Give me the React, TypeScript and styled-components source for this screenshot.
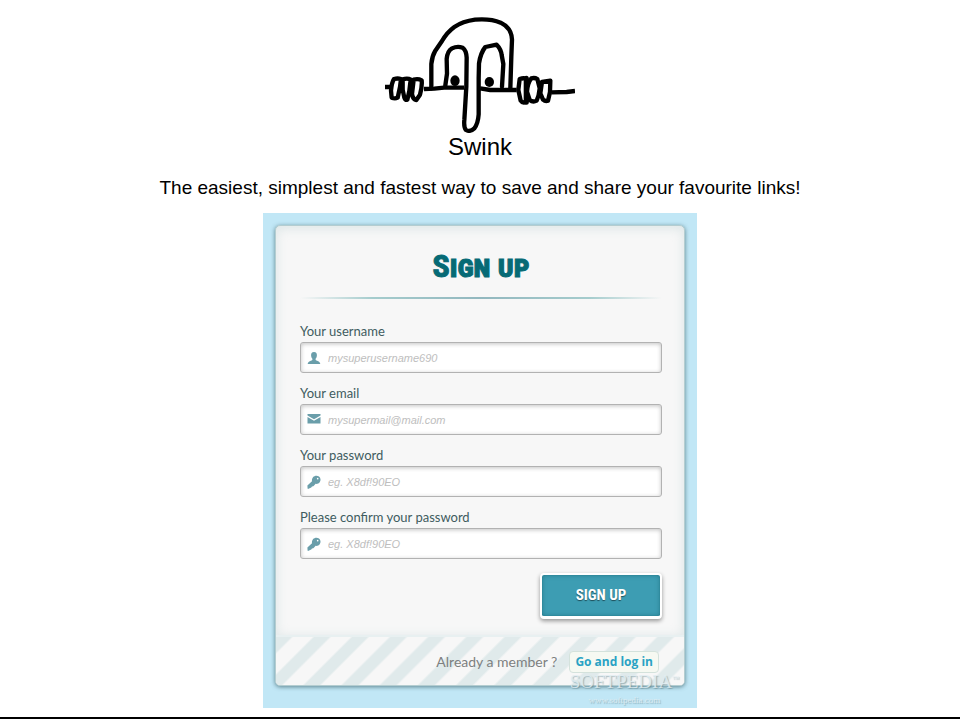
import React from "react";
import styled, { createGlobalStyle } from "styled-components";

const GlobalStyle = createGlobalStyle`
  *, *::before, *::after { box-sizing: border-box; }
  body { margin: 0; background: #fff; color: #000; font-family: "Liberation Sans", Arial, sans-serif; }
`;

const Page = styled.main`
  display: flex;
  flex-direction: column;
  align-items: center;
  padding-top: 17px;
  border-bottom: 2px solid #000;
`;

const Logo = styled.svg`
  display: block;
  width: 190px;
  height: 116px;
`;

const Brand = styled.h1`
  margin: 0;
  font-size: 24px;
  line-height: 28px;
  font-weight: 400;
`;

const Tagline = styled.p`
  margin: 15px 0 13px;
  font-size: 19px;
  line-height: 24px;
  text-align: center;
`;

const Backdrop = styled.section`
  position: relative;
  width: 100%;
  max-width: 434px;
  margin-bottom: 9px;
  padding: 12px 12px 22px;
  background: #c1e7f6;
`;

const Card = styled.div`
  border: 1px solid #b4cdd0;
  border-radius: 5px;
  overflow: hidden;
  background: #f7f7f7;
  box-shadow: 0 1px 4px rgba(60, 100, 110, 0.75);
`;

const Form = styled.form`
  display: flex;
  flex-direction: column;
  padding: 20px 22px 16px 24px;
  box-shadow: inset 0 2px 12px rgba(110, 160, 165, 0.2);
`;

const Title = styled.h2`
  margin: 0;
  color: #066a75;
  font-family: "Roboto Condensed", "Open Sans Condensed", "Liberation Sans", sans-serif;
  font-size: 32px;
  line-height: 40px;
  font-variant: small-caps;
  font-weight: 700;
  text-align: center;
  -webkit-text-stroke: 1px #066a75;
`;

const Rule = styled.hr`
  width: 100%;
  height: 2px;
  margin: 11px 0 21px;
  border: 0;
  background: linear-gradient(to right, transparent, #a5cccd 20%, #93b8bf 50%, #a5cccd 80%, transparent);
`;

const Field = styled.div`
  display: flex;
  flex-direction: column;
  margin-bottom: 9px;
`;

const Label = styled.label`
  color: #405c60;
  font-family: Lato, "Open Sans", sans-serif;
  font-size: 13px;
  line-height: 22px;
`;

const InputFrame = styled.div`
  display: flex;
  align-items: center;
  height: 31px;
  padding-left: 6px;
  gap: 7px;
  border: 1px solid #b2b2b2;
  border-radius: 3px;
  background: #fff;
  box-shadow: inset 0 1px 4px rgba(0, 0, 0, 0.24);
`;

const Glyph = styled.svg`
  flex: none;
  width: 14px;
  height: 14px;
  fill: #6a9eaa;
`;

const Input = styled.input`
  flex: 1;
  min-width: 0;
  padding: 0;
  border: 0;
  outline: 0;
  background: transparent;
  color: #405c60;
  font-family: "Liberation Sans", Arial, sans-serif;
  font-size: 11px;
  line-height: 16px;
  font-style: italic;
  &::placeholder { color: #bebebe; opacity: 1; }
`;

const Submit = styled.button`
  align-self: flex-end;
  width: 122px;
  height: 46px;
  margin-top: 5px;
  padding: 0 0 2px;
  border: 2px solid #fff;
  border-bottom-width: 3px;
  border-radius: 4px;
  background: #3d9db3;
  box-shadow: inset 0 0 5px #267b8c, inset 0 0 1px #176674, 0 2px 4px rgba(0, 0, 0, 0.4);
  color: #fff;
  font-family: "Roboto Condensed", "Open Sans Condensed", "Liberation Sans", sans-serif;
  font-size: 15px;
  line-height: 24px;
  font-weight: 700;
  text-shadow: 0 1px 1px rgba(0, 0, 0, 0.5);
  cursor: pointer;
`;

const Footer = styled.footer`
  display: flex;
  align-items: center;
  justify-content: flex-end;
  gap: 12px;
  height: 50px;
  padding-top: 2px;
  padding-right: 25px;
  border-top: 2px solid #e8f0f1;
  background: repeating-linear-gradient(-45deg, #f7f7f7 0 13px, #e0eaeb 15px 25px, #f7f7f7 27px);
  color: #7d8080;
  font-family: Lato, "Open Sans", sans-serif;
  font-size: 14px;
  line-height: 20px;
`;

const LoginLink = styled.a`
  padding: 0 5px;
  border: 1px solid #d4e2dc;
  border-radius: 4px;
  background: #f6f9f2;
  color: #29a2c4;
  font-family: "Open Sans", "Noto Sans", sans-serif;
  font-size: 12px;
  font-weight: 700;
  text-decoration: none;
`;

const Watermark = styled.div`
  position: absolute;
  right: 18px;
  bottom: 0;
  display: flex;
  flex-direction: column;
  align-items: center;
  color: rgba(226, 238, 242, 0.85);
  font-family: "Liberation Serif", serif;
  text-shadow: 1px 1px 1px rgba(90, 125, 135, 0.5);
  pointer-events: none;
`;

const Mark = styled.span`
  font-size: 19px;
  line-height: 20px;
`;

const Trademark = styled.sup`
  font-size: 7px;
  line-height: 0;
`;

const Site = styled.small`
  font-size: 9px;
  line-height: 16px;
`;

const icons = {
  user: <path d="M7 1C4.700 1 3.900 2.600 4.100 4.700c.2 1.600.8 2.500 1.300 3v1.100C4.900 10 1 9.900.7 13h12.600C13 9.900 9.100 10 8.600 8.800V7.700c.5-.5 1.100-1.400 1.300-3C10.100 2.600 9.300 1 7 1Z" />,
  mail: <path d="M.5 1h13v1.500L7 6.200.5 2.500ZM.5 4 7 7.700 13.500 4v6.500H.5Z" />,
  key: <path d="M6 2.200C7.600.300 10.300.200 12 1.500c1.800 1.400 2 4 .7 5.800-1 1.300-2.600 1.800-4.100 1.500L7.300 10.200l-1 1-1.300.3-1 1.200-1.300.2-.6.800H.6l-.2-3.200L5 6.200c-.2-1.500.1-2.900 1-4Zm4.200.8a.8.8 0 1 0 1.200 1A.8.8 0 0 0 10.200 3Z" fillRule="evenodd" />,
};

const fields: { id: string; label: string; hint: string; type: string; icon: keyof typeof icons }[] = [
  { id: "username", label: "Your username", hint: "mysuperusername690", type: "text", icon: "user" },
  { id: "email", label: "Your email", hint: "mysupermail@mail.com", type: "email", icon: "mail" },
  { id: "password", label: "Your password", hint: "eg. X8df!90EO", type: "password", icon: "key" },
  { id: "confirm", label: "Please confirm your password", hint: "eg. X8df!90EO", type: "password", icon: "key" },
];

export default function App() {
  return (
    <>
      <GlobalStyle />
      <Page>
        <Logo viewBox="30 21 570 348" fill="none" stroke="#000" strokeWidth="13" strokeLinecap="round" strokeLinejoin="round" aria-hidden="true">
          <path d="M169 235V162Q171 139 181 122L201 93Q216 67 238 51Q263 34 300 29Q346 25 377 38Q410 54 411 89L409 140 406 235" />
          <path d="M211 226 216 191 215 147Q217 123 231 115Q247 107 263 113Q274 121 275 143L274 230 268 330Q266 352 273 360Q285 367 298 355Q309 341 311 313V205L312 160Q317 128 331 111L365 104Q378 117 380 135L385 162 381 230" />
          <path d="M147 237 178 236 207 233 267 233M315 235 346 240 425 240M529 247 575 246 600 243M30 231 45 231" strokeLinecap="butt" />
          <path d="M57 207Q68 204 78 207L75 231 68 263Q60 267 50 263L48 242Q50 218 57 207ZM83 208Q98 203 107 209L103 243 97 269Q91 272 88 263L83 239ZM116 209Q129 205 140 211Q142 229 135 254L124 270Q114 269 111 252ZM434 207Q445 203 453 206V276Q442 280 437 272L430 240ZM469 205Q479 202 487 207L494 235Q492 257 485 272Q474 278 464 270L456 245Q458 218 469 205ZM501 216 526 212 525 246 519 272Q511 275 504 269L496 250Z" strokeWidth="13" />
          <path d="M454 205V277" strokeWidth="15" />
          <ellipse cx="240" cy="212" rx="14" ry="16" fill="#000" stroke="none" />
          <ellipse cx="343" cy="216" rx="14" ry="15" fill="#000" stroke="none" />
        </Logo>
        <Brand>Swink</Brand>
        <Tagline>The easiest, simplest and fastest way to save and share your favourite links!</Tagline>
        <Backdrop>
          <Card>
            <Form onSubmit={(event) => event.preventDefault()}>
              <Title>Sign up</Title>
              <Rule />
              {fields.map((field) => (
                <Field key={field.id}>
                  <Label htmlFor={field.id}>{field.label}</Label>
                  <InputFrame>
                    <Glyph viewBox="0 0 14 14" aria-hidden="true">{icons[field.icon]}</Glyph>
                    <Input id={field.id} type={field.type} placeholder={field.hint} />
                  </InputFrame>
                </Field>
              ))}
              <Submit type="submit">SIGN UP</Submit>
            </Form>
            <Footer>
              <span>Already a member ?</span>
              <LoginLink href="#login">Go and log in</LoginLink>
            </Footer>
          </Card>
          <Watermark>
            <Mark>SOFTPEDIA<Trademark>™</Trademark></Mark>
            <Site>www.softpedia.com</Site>
          </Watermark>
        </Backdrop>
      </Page>
    </>
  );
}
